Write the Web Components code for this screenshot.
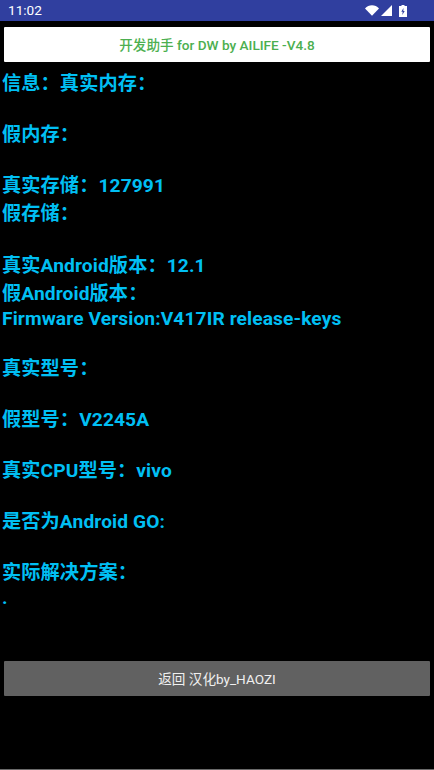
<!DOCTYPE html>
<html lang="zh">
<head>
<meta charset="utf-8">
<title>开发助手</title>
<style>
  html, body { margin: 0; padding: 0; background: #000; }
  body { width: 434px; height: 770px; overflow: hidden; font-family: Roboto, "Noto Sans CJK SC", sans-serif; }
</style>
</head>
<body>
<app-screen>
  <status-bar slot="status" time="11:02"></status-bar>
  <app-button slot="top" kind="light">开发助手 for DW by AILIFE -V4.8</app-button>
  <info-line h="28" gap="23">信息：真实内存：</info-line>
  <info-line h="28" gap="23">假内存：</info-line>
  <info-line h="28">真实存储：127991</info-line>
  <info-line h="28" gap="24">假存储：</info-line>
  <info-line h="28">真实Android版本：12.1</info-line>
  <info-line h="28">假Android版本：</info-line>
  <info-line h="21" gap="27">Firmware Version:V417IR release-keys</info-line>
  <info-line h="25" gap="26">真实型号：</info-line>
  <info-line h="25" gap="26">假型号：V2245A</info-line>
  <info-line h="25" gap="26">真实CPU型号：vivo</info-line>
  <info-line h="25" gap="26">是否为Android GO:</info-line>
  <info-line h="25">实际解决方案：</info-line>
  <info-line h="25">.</info-line>
  <app-button slot="bottom" kind="dark">返回 汉化by_HAOZI</app-button>
</app-screen>

<script>
customElements.define('status-bar', class extends HTMLElement {
  constructor() {
    super();
    this.attachShadow({ mode: 'open' });
    this.shadowRoot.innerHTML = `
      <style>
      :host {
        display: flex;
        align-items: center;
        box-sizing: border-box;
        height: 21px;
        padding: 0 0 0 8px;
        background: #303f9f;
        color: #fff;
        font: 400 13.6px Roboto, sans-serif;
      }
      .time { flex: 1; padding-bottom: 2px; }
      .icons { display: flex; align-items: center; margin-right: 27px; }
      svg { display: block; fill: #fff; }
      </style>
      <span class="time">${this.getAttribute('time')}</span>
      <div class="icons">
        <svg width="14" height="11" viewBox="0 0 14 11"><path d="M7 10.800 0 3.400C2 1.400 4.400.300 7 .300s5 1.100 7 3.100z"/></svg>
        <svg width="11" height="11" viewBox="0 0 11 11" style="margin-left:2px"><path d="M11 0v11H0z"/></svg>
        <svg width="8" height="12" viewBox="0 0 8 12" style="margin-left:7px"><path fill-rule="evenodd" d="M2.500 0h3v1H8v11H0V1h2.500zM4.500 3 2.300 6.800h1.400L3.300 10l2.400-4H4.300z"/></svg>
      </div>
    `;
  }
});

customElements.define('app-button', class extends HTMLElement {
  constructor() {
    super();
    this.attachShadow({ mode: 'open' });
    this.shadowRoot.innerHTML = `
      <style>
      :host {
        display: flex;
        align-items: center;
        justify-content: center;
        box-sizing: border-box;
        height: 35px;
        margin: 0 4px;
        padding-bottom: 2px;
        border-radius: 1px;
        font-family: Roboto, "Noto Sans CJK SC", sans-serif;
        font-size: 13.6px;
      }
      :host([kind="light"]) { background: #fff; color: #4caf50; font-weight: 500; }
      :host([kind="dark"]) { background: #616161; color: #f0f0f0; font-weight: 400; }
      </style>
      <slot></slot>
    `;
  }
});

customElements.define('info-line', class extends HTMLElement {
  constructor() {
    super();
    this.attachShadow({ mode: 'open' });
    const h = this.getAttribute('h') || 25;
    const gap = this.getAttribute('gap') || 0;
    this.shadowRoot.innerHTML = `
      <style>
      :host {
        display: block;
        height: ${h}px;
        margin-bottom: ${gap}px;
        line-height: ${h}px;
        padding-left: 2px;
        color: #00bff3;
        font-family: Roboto, "Noto Sans CJK SC", sans-serif;
        font-size: 19.2px;
        font-weight: 700;
        letter-spacing: .1px;
        white-space: nowrap;
      }
      </style>
      <slot></slot>
    `;
  }
});

customElements.define('app-screen', class extends HTMLElement {
  constructor() {
    super();
    this.attachShadow({ mode: 'open' });
    this.shadowRoot.innerHTML = `
      <style>
      :host { display: flex; flex-direction: column; height: 770px; background: #000; }
      .top { display: block; padding: 6px 0 8px; }
      .info { display: block; }
      .bottom { display: block; margin-top: 51px; }
      .rule { margin-top: auto; height: 1px; background: #6a6a6a; }
      </style>
      <slot name="status"></slot>
      <div class="top"><slot name="top"></slot></div>
      <div class="info"><slot></slot></div>
      <div class="bottom"><slot name="bottom"></slot></div>
      <div class="rule"></div>
    `;
  }
});
</script>
</body>
</html>
